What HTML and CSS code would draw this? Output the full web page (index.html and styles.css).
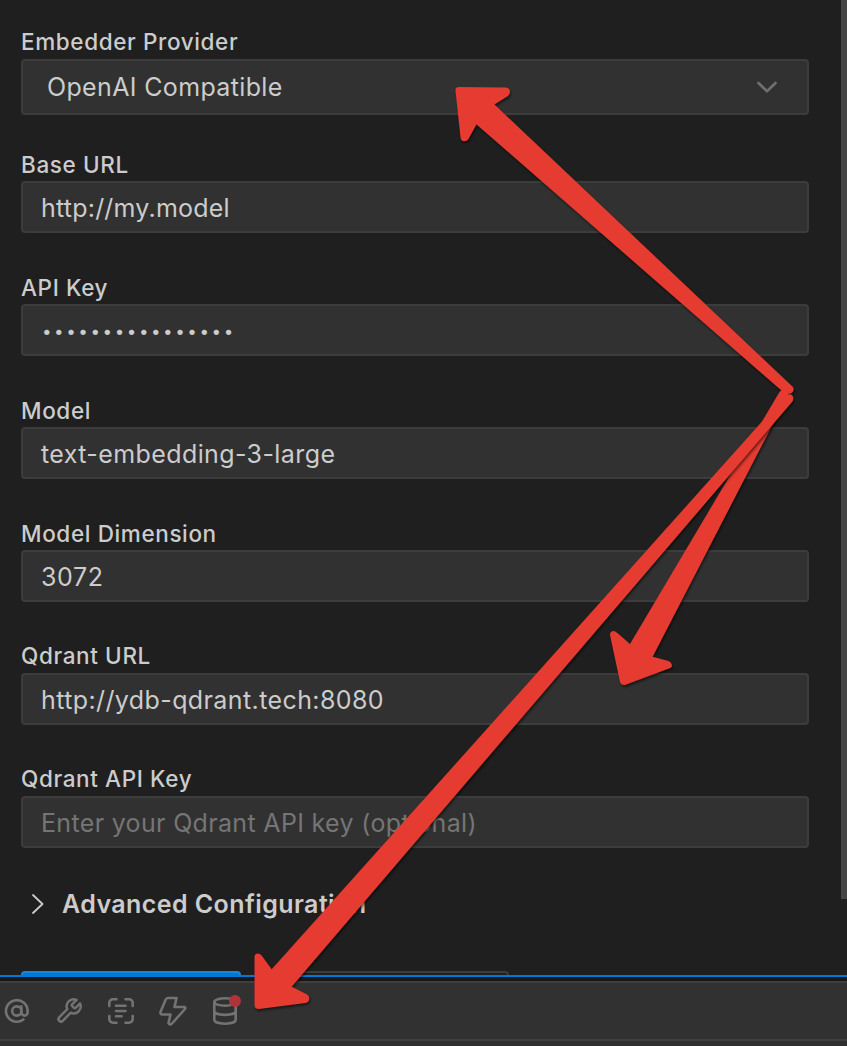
FILE: index.html
```html
<!DOCTYPE html>
<html lang="en">

<head>
    <meta charset="UTF-8">
    <meta name="viewport" content="width=device-width, initial-scale=1.0">
    <title>Codebase Indexing</title>
    <link rel="stylesheet" href="styles.css">
</head>

<body>
    <main class="panel">
        <form class="settings">
            <div class="field field-select">
                <label>Embedder Provider</label>
                <div class="control select">
                    <span>OpenAI Compatible</span>
                    <svg class="chevron" viewBox="0 0 20 12" width="20" height="12">
                        <path d="M1.500 2L10 10.300L18.500 2" />
                    </svg>
                </div>
            </div>
            <div class="field">
                <label>Base URL</label>
                <div class="control"><span class="url">http://my.model</span></div>
            </div>
            <div class="field">
                <label>API Key</label>
                <div class="control"><span class="secret">••••••••••••••••</span></div>
            </div>
            <div class="field">
                <label>Model</label>
                <div class="control"><span class="model">text-embedding-3-large</span></div>
            </div>
            <div class="field">
                <label>Model Dimension</label>
                <div class="control"><span class="number">3072</span></div>
            </div>
            <div class="field qdrant">
                <label>Qdrant URL</label>
                <div class="control"><span>http://ydb-qdrant.tech:8080</span></div>
            </div>
            <div class="field qdrant">
                <label>Qdrant API Key</label>
                <div class="control"><span class="placeholder">Enter your Qdrant API key (optional)</span></div>
            </div>
            <div class="advanced">
                <svg viewBox="0 0 12 20" width="12" height="20">
                    <path d="M1 1L10.500 10L1 19" />
                </svg>
                <span>Advanced Configuration</span>
            </div>
            <div class="buttons">
                <div class="btn primary"></div>
                <div class="btn secondary"></div>
            </div>
        </form>
        <div class="scrollbar"></div>
    </main>

    <footer class="toolbar">
        <svg viewBox="0 0 28 28" width="28" height="28">
            <circle cx="13.800" cy="14" r="4.600" />
            <path d="M18.400 9.400V15.500a3.100 3.100 0 0 0 6.200 0V14a10.800 10.800 0 1 0-4.200 8.500" />
        </svg>
        <svg class="wrench" viewBox="0 0 24 24" width="28" height="28">
            <path d="M14.700 6.300a1 1 0 0 0 0 1.400l1.600 1.600a1 1 0 0 0 1.400 0l3.770-3.770a6 6 0 0 1-7.940 7.940l-6.910 6.910a2.120 2.120 0 0 1-3-3l6.910-6.910a6 6 0 0 1 7.940-7.940l-3.760 3.760z" />
        </svg>
        <svg viewBox="0 0 28 28" width="28" height="28">
            <path d="M2.300 9V6a3.700 3.700 0 0 1 3.700-3.700H9.500M18.500 2.300h3.500a3.700 3.700 0 0 1 3.700 3.700V9M25.700 19v3a3.700 3.700 0 0 1-3.700 3.700H18.500M9.500 25.700H6a3.700 3.700 0 0 1-3.700-3.700V19" />
            <path d="M9 8.800H18.500M9 14H18.500M9 19.200H14.500" />
        </svg>
        <svg viewBox="0 0 28 30" width="28" height="30">
            <path d="M9 2H17.500L15.500 11H25.500Q27 11.500 26 13L13 27.500Q10.500 29.500 9.500 27L11.500 18.500H3Q1 18 1.500 16L6.500 4Q7.300 2 9 2Z" />
        </svg>
        <div class="database">
            <svg viewBox="0 0 28 28" width="28" height="28">
                <ellipse cx="14" cy="5" rx="10.700" ry="3.700" />
                <path d="M3.300 5V22.800c0 2.200 4 3.900 10.700 3.900s10.700-1.700 10.700-3.900V5M3.300 14c0 2.200 4 3.900 10.700 3.900s10.700-1.700 10.700-3.900" />
            </svg>
            <span class="badge"></span>
        </div>
    </footer>
    <div class="bottom"></div>

    <svg class="arrows" viewBox="0 0 847 1046" width="847" height="1046">
        <path d="M455.500 91Q455 87 459 87L506 87.500Q510 88 510 92Q510 94 508 96L494.500 104.500L793 387Q795 391 791 393.500L786 394.500L476.500 124.500L468.500 139Q466.500 141.500 464 141.200Q461 141 460.500 137.500Z" />
        <path d="M610 635Q610 631 614 631Q616 631.500 618 633.500L630 644L779.500 392Q783 388 787 391L789 393L652.700 656.700L668.500 661Q672 662.500 672 666Q671.500 668 669 668.500L625 685Q621 685.500 620 682Z" />
        <path d="M254.500 957Q254.500 953.500 258 953.500Q260.500 953.500 262 956L271.700 969.300L784 397Q788 393 792 395Q794.500 398 792.500 401.500L291.700 986.700L306.700 994.300Q309.500 996 309.300 998.500Q309 1002.500 305.500 1003L259 1009Q254.500 1009 254.500 1005Z" />
    </svg>
</body>

</html>
```
FILE: styles.css
```css
body {
    margin: 0;
    height: 1046px;
    display: flex;
    flex-direction: column;
    position: relative;
    overflow: hidden;
    background-color: #181818;
    color: #cccccc;
    font-family: Inter, "Liberation Sans", sans-serif;
}

.panel {
    display: flex;
    justify-content: space-between;
    height: 975px;
    overflow: hidden;
    background-color: #1f1f1f;
    border-bottom: 2px solid #0078d4;
}

.settings {
    width: 788px;
    padding: 26px 0 0 21px;
}

.scrollbar {
    width: 6px;
    height: 899px;
    background-color: #454545;
}

.field {
    margin-bottom: 39px;
}

.field label {
    display: block;
    font-size: 22.500px;
    font-weight: 500;
    line-height: 32px;
    letter-spacing: 0.620px;
    white-space: nowrap;
}

.field-select {
    margin-bottom: 34px;
}

.field-select label {
    margin-bottom: 1px;
}

.qdrant label {
    margin-top: -1px;
    padding-bottom: 1px;
}

.control {
    box-sizing: border-box;
    display: flex;
    align-items: center;
    height: 52px;
    padding: 2px 18px 0;
    border: 2px solid #3c3c3c;
    border-radius: 4px;
    background-color: #313131;
    font-size: 25px;
    letter-spacing: 0.400px;
    white-space: nowrap;
}

.select {
    justify-content: space-between;
    height: 56px;
    padding: 0 30px 0 24px;
    letter-spacing: 0.350px;
}

.url {
    letter-spacing: 0.220px;
}

.number {
    letter-spacing: 0.650px;
}

.secret {
    padding-left: 1px;
    font-size: 17px;
    letter-spacing: 2.550px;
}

.placeholder {
    color: #757575;
    letter-spacing: 0.330px;
}

svg {
    fill: none;
    stroke-linecap: round;
    stroke-linejoin: round;
}

.chevron {
    stroke: #6e6e6e;
    stroke-width: 2.700;
}

.advanced {
    display: flex;
    align-items: center;
    gap: 18px;
    height: 40px;
    margin-top: -3px;
    padding-left: 11px;
    font-size: 25px;
    font-weight: 600;
    letter-spacing: 0.420px;
    white-space: nowrap;
}

.advanced svg {
    stroke: #cccccc;
    stroke-width: 1.800;
}

.buttons {
    display: flex;
    gap: 16px;
    margin-top: 47px;
}

.btn {
    box-sizing: border-box;
    width: 220px;
    height: 52px;
    border: 2px solid #3c3c3c;
    border-radius: 4px;
}

.primary {
    border: 2px solid #1a85d8;
    background-color: #0078d4;
}

.secondary {
    width: 252px;
}

.toolbar {
    box-sizing: border-box;
    display: flex;
    align-items: center;
    gap: 24px;
    height: 60px;
    margin-top: 4px;
    padding-left: 3px;
    border-top: 2px solid #3f3f3f;
    border-bottom: 2px solid #3f3f3f;
    background-color: #313131;
}

.toolbar svg {
    display: block;
    stroke: #737373;
    stroke-width: 2.600;
}

.toolbar .wrench {
    stroke-width: 2.100;
}

.database {
    position: relative;
}

.badge {
    position: absolute;
    top: -2px;
    right: -2px;
    width: 12px;
    height: 12px;
    border-radius: 50%;
    background-color: #ad343a;
}

.bottom {
    flex: 1;
    background-color: #2f2f2f;
}

/* annotation arrows on top of the form */
.arrows {
    position: absolute;
    top: 0;
    left: 0;
}

.arrows path {
    fill: #e53b30;
    filter: drop-shadow(1px 2px 1px rgba(0, 0, 0, 0.500));
}
```
